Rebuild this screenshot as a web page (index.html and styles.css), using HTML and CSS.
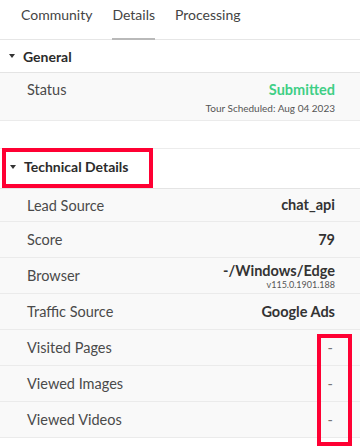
FILE: index.html
```html
<!DOCTYPE html>
<html lang="en">

<head>
    <meta charset="UTF-8">
    <meta name="viewport" content="width=device-width, initial-scale=1.0">
    <title>Details</title>
    <link rel="stylesheet" href="styles.css">
</head>

<body>
    <div class="panel">
        <div class="tabs">
            <div class="tab">Community</div>
            <div class="tab active">Details</div>
            <div class="tab">Processing</div>
        </div>

        <div class="section-head">
            <span class="caret"></span>
            <span>General</span>
        </div>
        <div class="row row-status">
            <div class="label">Status</div>
            <div class="value">
                <div class="status">Submitted</div>
                <div class="sub">Tour Scheduled: Aug 04 2023</div>
            </div>
        </div>

        <div class="section-head tech">
            <div class="mark">
                <span class="caret"></span>
                <span>Technical Details</span>
            </div>
        </div>
        <div class="row row-first">
            <div class="label">Lead Source</div>
            <div class="value">chat_api</div>
        </div>
        <div class="row">
            <div class="label">Score</div>
            <div class="value">79</div>
        </div>
        <div class="row">
            <div class="label">Browser</div>
            <div class="value">
                <div>-/Windows/Edge</div>
                <div class="sub small">v115.0.1901.188</div>
            </div>
        </div>
        <div class="row">
            <div class="label">Traffic Source</div>
            <div class="value">Google Ads</div>
        </div>
        <div class="rows-marked">
            <div class="row">
                <div class="label">Visited Pages</div>
                <div class="value dash">-</div>
            </div>
            <div class="row">
                <div class="label">Viewed Images</div>
                <div class="value dash">-</div>
            </div>
            <div class="row">
                <div class="label">Viewed Videos</div>
                <div class="value dash">-</div>
            </div>
            <!-- annotation box over the empty values -->
            <div class="highlight"></div>
        </div>
    </div>
</body>

</html>
```

FILE: styles.css
```css
* {
    box-sizing: border-box;
    margin: 0;
    padding: 0;
}

body {
    font-family: Lato, "Open Sans", sans-serif;
    font-size: 13px;
    color: #333;
    background-color: #fff;
}

.panel {
    width: 360px;
    height: 448px;
    overflow: hidden;
}

/* Tabs */
.tabs {
    display: flex;
    gap: 20px;
    height: 40px;
    padding-left: 21px;
    border-bottom: 1px solid #e6e6e6;
}

.tab {
    padding-top: 6px;
    line-height: 18px;
    font-size: 14px;
    color: #444;
}

.tab.active {
    border-bottom: 2px solid #b9b9b9;
    margin-bottom: -1px;
}

/* Section headers */
.section-head {
    display: flex;
    align-items: center;
    gap: 8px;
    height: 33px;
    padding-left: 9px;
    font-size: 14px;
    font-weight: 700;
    color: #2b2b2b;
    border-bottom: 1px solid #e4e4e4;
}

.caret {
    width: 0;
    height: 0;
    border-left: 3.5px solid transparent;
    border-right: 3.5px solid transparent;
    border-top: 4px solid #333;
}

.section-head.tech {
    height: 41px;
    margin-top: 27px;
    padding-left: 2px;
    align-items: flex-end;
    border-top: 1px solid #ececec;
}

.mark {
    display: flex;
    align-items: center;
    gap: 8px;
    width: 151px;
    height: 40px;
    padding-left: 4px;
    padding-bottom: 3px;
    border: 4px solid #ff0033;
}

/* Rows */
.row {
    display: flex;
    justify-content: space-between;
    align-items: center;
    height: 36px;
    padding: 0 25px 0 27px;
    background-color: #f9f9f9;
    border-bottom: 1px solid #ebebeb;
}

.row-first {
    height: 33px;
}

.label {
    font-size: 14.5px;
    color: #4a4a4a;
}

.value {
    text-align: right;
    font-size: 14.5px;
    font-weight: 700;
    color: #333;
    line-height: 16px;
}

.row-status {
    height: 48px;
    align-items: flex-start;
    padding-top: 9px;
}

.row-status .label {
    line-height: 16px;
}

.status {
    color: #3fcf86;
    font-size: 14.5px;
}

.sub {
    margin-top: 5px;
    font-size: 10px;
    font-weight: 400;
    color: #555;
    line-height: 11px;
}

.sub.small {
    margin-top: 1px;
    font-size: 9px;
    line-height: 9px;
}

.dash {
    padding-right: 2px;
    font-weight: 400;
    color: #777;
}

.rows-marked {
    position: relative;
}

.highlight {
    position: absolute;
    top: 4px;
    right: 8px;
    width: 35px;
    height: 112px;
    border: 4px solid #ff0033;
}
```
